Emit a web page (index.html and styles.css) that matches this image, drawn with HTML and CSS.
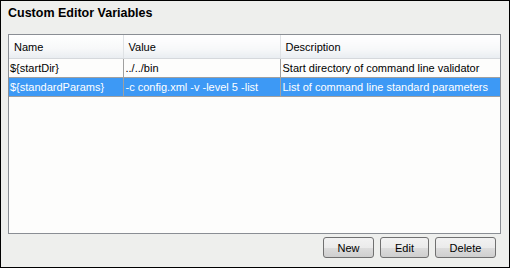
FILE: index.html
```html
<!DOCTYPE html>
<html lang="en">

<head>
    <meta charset="UTF-8">
    <title>Custom Editor Variables</title>
    <link rel="stylesheet" href="styles.css">
</head>

<body>
    <div class="panel">
        <h1 class="title">Custom Editor Variables</h1>
        <div class="table-box">
            <table class="vars">
                <thead>
                    <tr>
                        <th class="col-name">Name</th>
                        <th class="col-value">Value</th>
                        <th class="col-desc">Description</th>
                    </tr>
                </thead>
                <tbody>
                    <tr>
                        <td>${startDir}</td>
                        <td>../../bin</td>
                        <td>Start directory of command line validator</td>
                    </tr>
                    <tr class="selected">
                        <td>${standardParams}</td>
                        <td>-c config.xml -v -level 5 -list</td>
                        <td>List of command line standard parameters</td>
                    </tr>
                </tbody>
            </table>
        </div>
        <div class="buttons">
            <button class="btn btn-new">New</button>
            <button class="btn btn-edit">Edit</button>
            <button class="btn btn-delete">Delete</button>
        </div>
    </div>
</body>

</html>
```

FILE: styles.css
```css
* {
    box-sizing: border-box;
    margin: 0;
    padding: 0;
}

body {
    font-family: "Liberation Sans", Arial, sans-serif;
    font-size: 11px;
    color: #000;
}

.panel {
    width: 510px;
    height: 268px;
    border: 1px solid #000;
    background-color: #eeefed;
    display: flex;
    flex-direction: column;
    padding: 0 8px 0 7px;
}

.title {
    font-size: 12.5px;
    font-weight: bold;
    line-height: 14px;
    margin-top: 5px;
    height: 28px;
}

.table-box {
    height: 200px;
    border: 1px solid #8a8e94;
    background-color: #fdfdfc;
    overflow: hidden;
}

.vars {
    width: 100%;
    border-collapse: collapse;
    table-layout: fixed;
}

.vars th {
    font-weight: normal;
    text-align: left;
    height: 23px;
    padding: 1px 5px 0;
    background: linear-gradient(#ffffff, #f7f8f9 60%, #e9edf1);
    border-bottom: 1px solid #d5d8dc;
    border-left: 1px solid #dfe2e5;
}

.vars th:first-child {
    border-left: none;
}

.col-name {
    width: 114px;
}

.col-value {
    width: 157px;
}

.vars td {
    height: 19px;
    padding: 1px 2px 0;
    white-space: nowrap;
    overflow: hidden;
    border-left: 1px solid #a0a0a0;
    border-bottom: 1px solid #a0a0a0;
}

.vars td:first-child {
    border-left: none;
    padding-left: 1px;
}

.vars tr.selected td {
    background-color: #3d99f5;
    color: #fff;
}

.buttons {
    display: flex;
    justify-content: flex-end;
    gap: 6px;
    margin-top: 3px;
    padding-right: 5px;
}

.btn {
    font-family: "Liberation Sans", Arial, sans-serif;
    font-size: 11px;
    height: 21px;
    border: 1px solid #707070;
    border-radius: 3px;
    background: linear-gradient(#f2f2f2, #ebebeb 50%, #dddddd 51%, #cfcfcf);
    color: #000;
    cursor: pointer;
}

.btn-new {
    width: 51px;
}

.btn-edit {
    width: 49px;
}

.btn-delete {
    width: 61px;
}
```
